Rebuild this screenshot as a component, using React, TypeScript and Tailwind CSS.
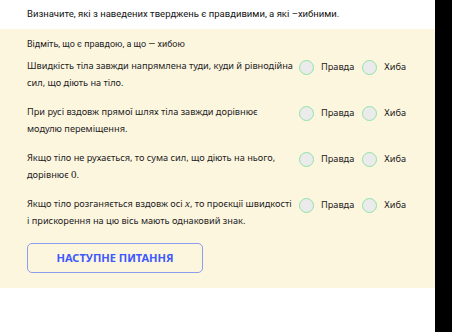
const statements: React.ReactNode[] = [
  "Швидкість тіла завжди напрямлена туди, куди й рівнодійна сил, що діють на тіло.",
  "При русі вздовж прямої шлях тіла завжди дорівнює модулю переміщення.",
  <>
    Якщо тіло не рухається, то сума сил, що діють на нього, дорівнює{" "}
    <span className="font-['Liberation_Serif',serif] text-[11px] leading-none">0</span>.
  </>,
  <>
    Якщо тіло розганяється вздовж осі{" "}
    <span className="font-['Liberation_Serif',serif] italic text-[11px] leading-none">x</span>, то проєкції швидкості
    і прискорення на цю вісь мають однаковий знак.
  </>,
]

function Radio({ label }: { label: string }) {
  return (
    <label className="flex items-center gap-[7px]">
      <span className="w-[15px] h-[15px] rounded-full bg-[#ebebeb] border border-[#8fe3a8] shrink-0" />
      <span className="text-[9.2px] text-[#222]">{label}</span>
    </label>
  )
}

export default function App() {
  return (
    <div className="flex w-[452px] h-[332px] bg-black font-['Noto_Sans',sans-serif]">
      <div className="w-[435px] h-full bg-white flex flex-col">
        <h1 className="h-[29px] pl-[27px] pt-[7px] text-[9.5px] text-[#111] font-['Roboto',sans-serif]">
          Визначите, які з наведених тверджень є правдивими, а які –хибними.
        </h1>
        <div className="bg-[#fdf6df] pl-[27px] pt-[9px] pb-[15px] flex flex-col">
          <p className="text-[9px] text-[#222] font-['Roboto',sans-serif] leading-[12px]">Відміть, що є правдою, а що — хибою</p>
          <div className="flex flex-col gap-[12px] mt-[7px]">
            {statements.map((s, i) => (
              <div key={i} className="flex items-start">
                <p className="w-[267px] mr-[5px] text-[9.2px] leading-[17px] text-[#222]">{s}</p>
                <div className="flex items-center h-[17px] pt-[3px]">
                  <Radio label="Правда" />
                  <div className="ml-[8px]">
                    <Radio label="Хиба" />
                  </div>
                </div>
              </div>
            ))}
          </div>
          <button className="mt-[14px] w-[176px] h-[30px] rounded-[5px] border border-[#8c9cf0] text-[11px] font-bold text-[#3d5afe] uppercase">
            Наступне питання
          </button>
        </div>
      </div>
    </div>
  )
}
